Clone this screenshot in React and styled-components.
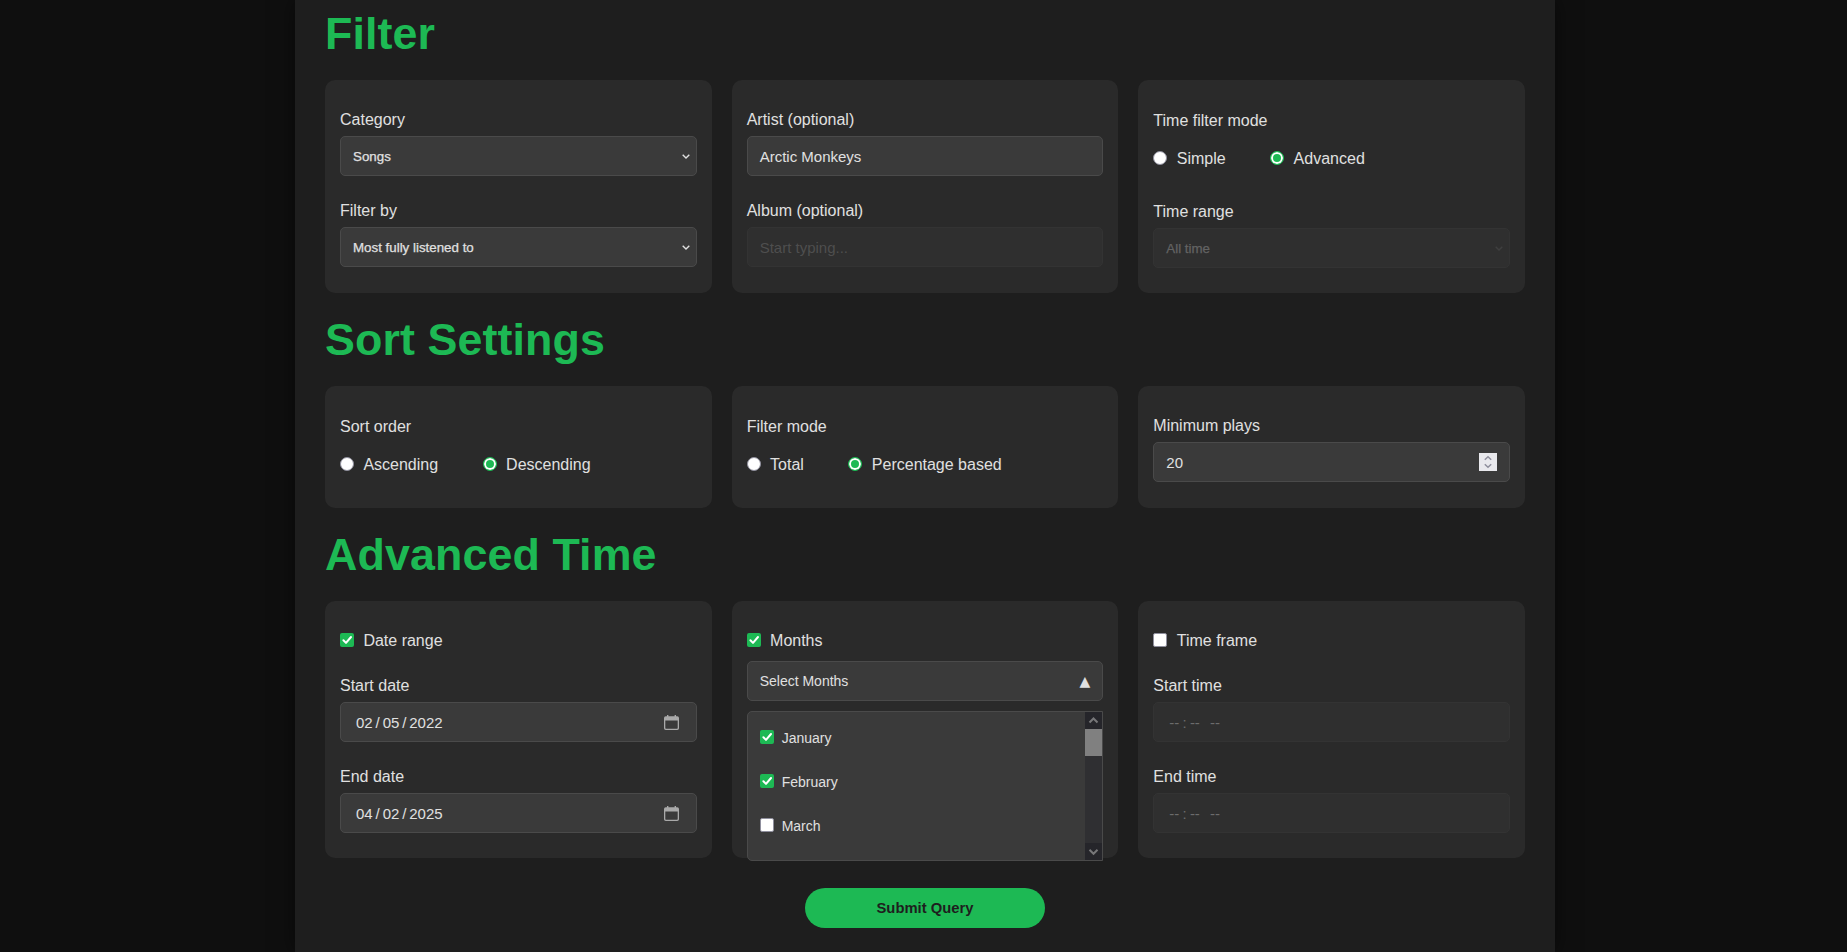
import React from "react";
import styled, { createGlobalStyle } from "styled-components";

const GlobalStyle = createGlobalStyle`
  * { box-sizing: border-box; }
  html, body { margin: 0; height: 100%; overflow: hidden; }
  body {
    background: #0f0f0f;
    color: #e0e0e0;
    font-family: "Liberation Sans", Arial, sans-serif;
    font-size: 16px;
    line-height: 18px;
  }
`;

const Panel = styled.main`
  width: 1260px;
  min-height: 952px;
  margin-left: 295px;
  padding: 0 30px 24px;
  background: #1e1e1e;
  box-shadow: 0 0 20px rgba(0, 0, 0, 0.5);
`;

const Title = styled.h1`
  margin: 0;
  padding: ${(p) => (p.$first ? "8px" : "21px")} 0 22px;
  color: #1db954;
  font-size: 44.8px;
  font-weight: 700;
  letter-spacing: 0.1px;
  line-height: 50px;
`;

const Grid = styled.section`
  display: grid;
  grid-template-columns: repeat(3, minmax(0, 1fr));
  gap: 20px;
`;

const Card = styled.div`
  height: ${(p) => p.$height}px;
  padding: ${(p) => p.$top || 30}px 15px 0;
  border-radius: 10px;
  background: #2a2a2a;
`;

const Field = styled.div`
  display: flex;
  flex-direction: column;
  gap: 8px;
  margin-bottom: 25px;
`;

const Label = styled.div`
  height: 18px;
  line-height: 20px;
  white-space: nowrap;
`;

const Control = styled.div`
  display: flex;
  align-items: center;
  justify-content: space-between;
  height: 40px;
  padding: 0 ${(p) => p.$right || 12}px 0 12px;
  border: 1px solid ${(p) => (p.$disabled ? "#333333" : "#4a4a4a")};
  border-radius: 5px;
  background: ${(p) => (p.$disabled ? "#2f2f2f" : "#3a3a3a")};
  color: ${(p) => (p.$disabled ? "#4e4e4e" : "#e0e0e0")};
  font-size: ${(p) => p.$size || 15}px;
`;

const ControlText = styled.span`
  padding-top: 2px;
`;

const SelectText = styled.span`
  padding-top: 1px;
  color: ${(p) => (p.$disabled ? "#636363" : "#e0e0e0")};
  font-size: 13.333px;
  -webkit-text-stroke: 0.25px currentColor;
`;

const Segments = styled.span`
  display: flex;
  padding: 2px 0 0 3px;
  white-space: pre;
  color: ${(p) => (p.$disabled ? "#6c6c6c" : "inherit")};
`;

const Separator = styled.span`
  padding: 0 ${(p) => p.$space || 2.9}px;
`;

const ChoiceGroup = styled.div`
  display: flex;
  gap: 44.6px;
  margin-top: ${(p) => p.$top || 0}px;
`;

const Choice = styled.div`
  display: flex;
  align-items: center;
  gap: 9.4px;
  height: 18px;
  white-space: nowrap;
`;

const ChoiceText = styled.span`
  padding-top: 2px;
`;

const RadioDot = styled.span`
  width: 14px;
  height: 14px;
  border: 1px solid ${(p) => (p.$checked ? "#1db954" : "#8f8f9d")};
  border-radius: 50%;
  background: ${(p) => (p.$checked ? "#1db954" : "#ffffff")};
  box-shadow: ${(p) => (p.$checked ? "inset 0 0 0 2px #ffffff" : "none")};
`;

const CheckSquare = styled.span`
  display: flex;
  width: 14px;
  height: 14px;
  border: ${(p) => (p.$checked ? "0" : "1px solid #8f8f9d")};
  border-radius: 2px;
  background: ${(p) => (p.$checked ? "#1db954" : "#ffffff")};
`;

const SpinBox = styled.span`
  display: flex;
  width: 18px;
  height: 18px;
  background: #e9e9ed;
`;

const Triangle = styled.span`
  font-family: "DejaVu Sans", sans-serif;
  font-size: 14px;
`;

const MonthsPicker = styled.div`
  position: relative;
  margin-top: 12px;
`;

const MonthsMenu = styled.div`
  position: absolute;
  top: 50px;
  left: 0;
  display: flex;
  justify-content: space-between;
  width: 100%;
  height: 150px;
  border: 1px solid #4a4a4a;
  border-radius: 5px 0 0 5px;
  background: #3a3a3a;
  overflow: hidden;
`;

const MonthList = styled.div`
  padding: 4px 12px;
`;

const MonthRow = styled.div`
  display: flex;
  align-items: center;
  gap: 8px;
  height: 44px;
  font-size: 14px;
  line-height: 16px;
`;

const MonthCheck = styled.span`
  padding-bottom: 2px;
`;

const Scrollbar = styled.div`
  display: flex;
  flex-direction: column;
  width: 17px;
  background: #2f2f32;
`;

const ScrollButton = styled.div`
  display: flex;
  height: 17px;
  background: #25252a;
`;

const ScrollThumb = styled.div`
  height: 27px;
  margin-bottom: auto;
  background: #808080;
`;

const Submit = styled.button`
  display: block;
  width: 240px;
  height: 40px;
  margin: 30px auto 0;
  padding: 0;
  border: 0;
  border-radius: 20px;
  background: #1db954;
  color: #1e1e1e;
  font: 700 14.8px "Liberation Sans", Arial, sans-serif;
`;

const Spacer = styled.div`
  height: ${(p) => p.$h}px;
`;

const SelectArrow = styled.svg`
  width: 8px;
  height: 5px;
  margin-right: -6px;
  opacity: ${(p) => (p.$disabled ? 0.09 : 1)};
`;

function Select({ label, value, disabled }) {
  return (
    <Field>
      <Label>{label}</Label>
      <Control $disabled={disabled}>
        <SelectText $disabled={disabled}>{value}</SelectText>
        <SelectArrow $disabled={disabled} viewBox="0 0 8 5">
          <path d="M0.7 0.7 L4 4 L7.3 0.7" fill="none" stroke="#e0e0e0" strokeWidth="1.4" />
        </SelectArrow>
      </Control>
    </Field>
  );
}

function Radio({ checked, children }) {
  return (
    <Choice>
      <RadioDot $checked={checked} />
      <ChoiceText>{children}</ChoiceText>
    </Choice>
  );
}

function Check({ checked }) {
  return (
    <CheckSquare $checked={checked}>
      {checked && (
        <svg width="14" height="14" viewBox="0 0 14 14">
          <path d="M3.4 7.3 L6 9.9 L11 4" fill="none" stroke="#fff" strokeWidth="2" strokeLinecap="round" strokeLinejoin="round" />
        </svg>
      )}
    </CheckSquare>
  );
}

function CheckOption({ checked, children }) {
  return (
    <Choice>
      <Check checked={checked} />
      <ChoiceText>{children}</ChoiceText>
    </Choice>
  );
}

function DateField({ label, month, day, year }) {
  return (
    <Field>
      <Label>{label}</Label>
      <Control $right={17}>
        <Segments>
          {month}<Separator>/</Separator>{day}<Separator>/</Separator>{year}
        </Segments>
        <svg width="15" height="15" viewBox="0 0 15 15">
          <path d="M3 0h1.4v1.2h6.2V0H12v1.2h1.2A1.8 1.8 0 0 1 15 3v10.2A1.8 1.8 0 0 1 13.2 15H1.8A1.8 1.8 0 0 1 0 13.2V3a1.8 1.8 0 0 1 1.8-1.8H3zM1.3 5.4v7.7c0 .4.2.6.6.6h11.2c.4 0 .6-.2.6-.6V5.4z" fill="#a9a9a9" fillRule="evenodd" />
        </svg>
      </Control>
    </Field>
  );
}

function TimeField({ label }) {
  return (
    <Field>
      <Label>{label}</Label>
      <Control $disabled>
        <Segments $disabled>
          --<Separator $space={3.2}>:</Separator>--<Separator $space={5.1} />--
        </Segments>
      </Control>
    </Field>
  );
}

const months = [
  { name: "January", checked: true },
  { name: "February", checked: true },
  { name: "March", checked: false },
];

export default function App() {
  return (
    <>
      <GlobalStyle />
      <Panel>
        <Title $first>Filter</Title>
        <Grid>
          <Card $height={213}>
            <Select label="Category" value="Songs" />
            <Select label="Filter by" value="Most fully listened to" />
          </Card>
          <Card $height={213}>
            <Field>
              <Label>Artist (optional)</Label>
              <Control><ControlText>Arctic Monkeys</ControlText></Control>
            </Field>
            <Field>
              <Label>Album (optional)</Label>
              <Control $disabled><ControlText>Start typing...</ControlText></Control>
            </Field>
          </Card>
          <Card $height={213} $top={31}>
            <Label>Time filter mode</Label>
            <ChoiceGroup $top={20}>
              <Radio>Simple</Radio>
              <Radio checked>Advanced</Radio>
            </ChoiceGroup>
            <Spacer $h={35} />
            <Select label="Time range" value="All time" disabled />
          </Card>
        </Grid>

        <Title>Sort Settings</Title>
        <Grid>
          <Card $height={122} $top={31}>
            <Label>Sort order</Label>
            <ChoiceGroup $top={20}>
              <Radio>Ascending</Radio>
              <Radio checked>Descending</Radio>
            </ChoiceGroup>
          </Card>
          <Card $height={122} $top={31}>
            <Label>Filter mode</Label>
            <ChoiceGroup $top={20}>
              <Radio>Total</Radio>
              <Radio checked>Percentage based</Radio>
            </ChoiceGroup>
          </Card>
          <Card $height={122}>
            <Field>
              <Label>Minimum plays</Label>
              <Control>
                <ControlText>20</ControlText>
                <SpinBox>
                  <svg width="18" height="18" viewBox="0 0 18 18">
                    <path d="M5.8 6.8 L9 3.8 L12.2 6.8 M5.8 11.3 L9 14.3 L12.2 11.3" fill="none" stroke="#8f8f9d" strokeWidth="1.5" />
                  </svg>
                </SpinBox>
              </Control>
            </Field>
          </Card>
        </Grid>

        <Title>Advanced Time</Title>
        <Grid>
          <Card $height={257}>
            <CheckOption checked>Date range</CheckOption>
            <Spacer $h={27} />
            <DateField label="Start date" month="02" day="05" year="2022" />
            <DateField label="End date" month="04" day="02" year="2025" />
          </Card>
          <Card $height={257}>
            <CheckOption checked>Months</CheckOption>
            <MonthsPicker>
              <Control $size={14}>
                Select Months
                <Triangle>▲</Triangle>
              </Control>
              <MonthsMenu>
                <MonthList>
                  {months.map((m) => (
                    <MonthRow key={m.name}>
                      <MonthCheck><Check checked={m.checked} /></MonthCheck>
                      <span>{m.name}</span>
                    </MonthRow>
                  ))}
                </MonthList>
                <Scrollbar>
                  <ScrollButton>
                    <svg width="17" height="17" viewBox="0 0 17 17">
                      <path d="M4.5 10.5 L8.5 6.5 L12.5 10.5" fill="none" stroke="#777779" strokeWidth="2" />
                    </svg>
                  </ScrollButton>
                  <ScrollThumb />
                  <ScrollButton>
                    <svg width="17" height="17" viewBox="0 0 17 17">
                      <path d="M4.5 6.8 L8.5 10.8 L12.5 6.8" fill="none" stroke="#777779" strokeWidth="2" />
                    </svg>
                  </ScrollButton>
                </Scrollbar>
              </MonthsMenu>
            </MonthsPicker>
          </Card>
          <Card $height={257}>
            <CheckOption>Time frame</CheckOption>
            <Spacer $h={27} />
            <TimeField label="Start time" />
            <TimeField label="End time" />
          </Card>
        </Grid>
        <Submit>Submit Query</Submit>
      </Panel>
    </>
  );
}
